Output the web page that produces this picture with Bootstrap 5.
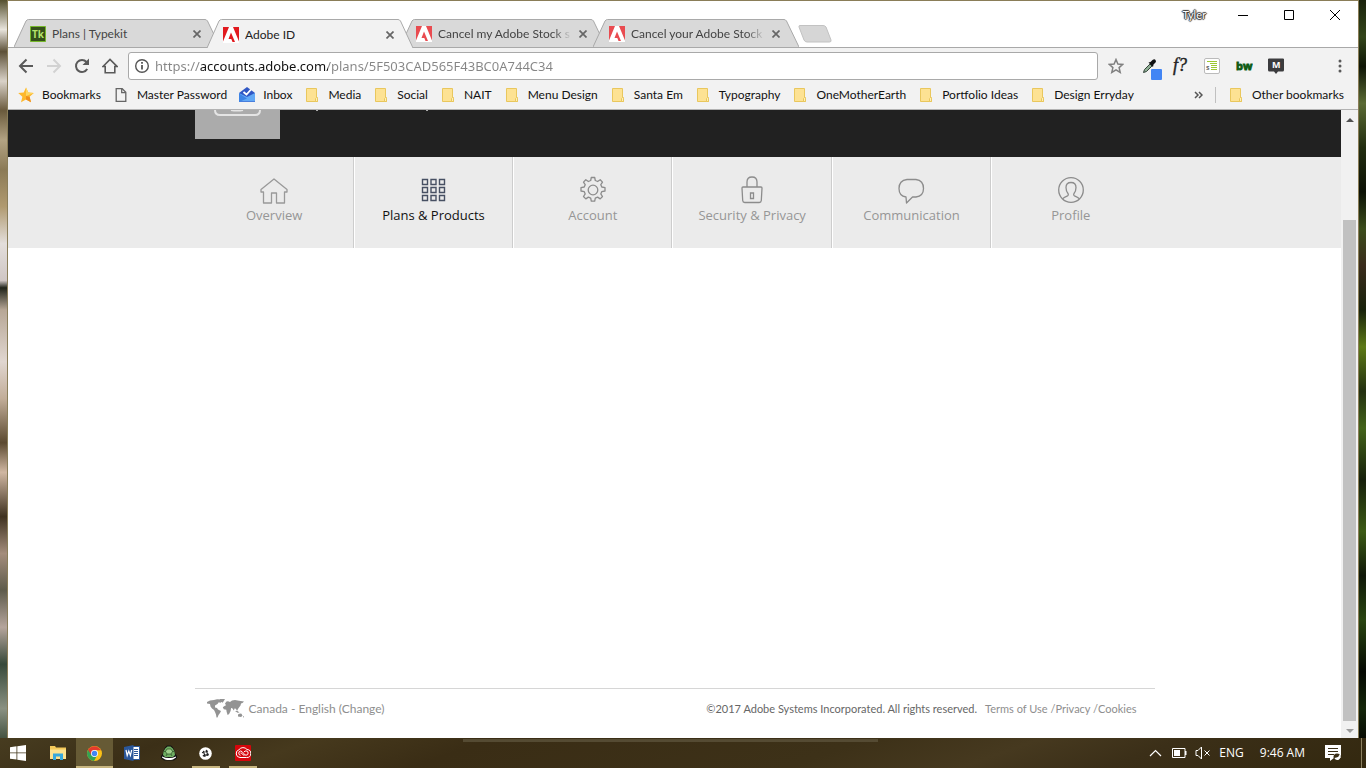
<!DOCTYPE html>
<html lang="en">
<head>
<meta charset="utf-8">
<meta name="viewport" content="width=device-width, initial-scale=1">
<title>Adobe ID</title>
<link href="https://cdn.jsdelivr.net/npm/bootstrap@5.3.0/dist/css/bootstrap.min.css" rel="stylesheet">
<script src="https://cdn.jsdelivr.net/npm/bootstrap@5.3.0/dist/js/bootstrap.bundle.min.js"></script>
<style>
body{font-family:Lato,"Open Sans",sans-serif;font-size:12px;line-height:16px;color:#111;background:#3b3019}
button,input{font:inherit;color:inherit}
button{background:none;border:0;padding:0}
a{text-decoration:none;color:inherit}
svg{display:block;flex:none}
.desktop{padding:0 7px;background:
 linear-gradient(#55502f,#e8e4dc 4%,#5d5138 7%,#d9d2c8 11%,#6a5a3c 15%,#b3a383 19%,#8b7a56 23%,#b09a70 28%,#e3dedb 33%,#cfc6c4 38%,#20241a 39%,#b7a796 42%,#e0d6d0 49%,#c2ad98 54%,#5c4a30 60%,#d0b7a2 64%,#3f3220 70%,#a48d7c 75%,#5e5b4b 80%,#b5a59c 85%,#37493a 90%,#8a9182 96%,#465442) left/7px 100% no-repeat,
 linear-gradient(#1a230c,#33451a 5%,#0f1606 9%,#5a6a34 14%,#222d10 20%,#0c1105 26%,#3c4d1c 31%,#3a2c1c 36%,#18220b 42%,#5d7a17 47%,#233010 53%,#43631a 58%,#16200b 65%,#3c5a15 72%,#0f1808 78%,#294511 84%,#050903 91%,#14260a 96%,#070b03) right/7px 100% no-repeat}
.app-window{border:1px solid #8a7d58;border-bottom:0;background:#fff}
.tabstrip{height:47px;padding:0 0 0 6px;border-bottom:1px solid #a9a9a9}
.tab{position:relative;width:206px;height:28px;margin-right:-13px;padding:2px 19px 0 16px;color:#444}
.tab .shape{position:absolute;inset:0;width:100%;height:100%}
.tab .shape path{fill:#d9d9d9;stroke:#a9a9a9}
.tab.current{z-index:2;margin-bottom:-1px;height:29px}
.tab.current .shape path{fill:#f2f2f2}
.tab>*:not(.shape){position:relative}
.tab-title{flex:1 1 auto;overflow:hidden;white-space:nowrap;margin:0 7px 0 6px}
.tab-title.fade-end{-webkit-mask-image:linear-gradient(90deg,#000 86%,transparent);mask-image:linear-gradient(90deg,#000 86%,transparent)}
.current .tab-title{color:#222}
.close-x{color:#666}
.win-controls{height:28px}
.win-controls button{width:46px}
.user-tag{font-size:11px;color:#fff;text-shadow:0 0 1px #333,1px 0 1px #333,-1px 0 1px #333,0 1px 1px #333,0 -1px 1px #333;padding-right:14px}
.chrome-bar{background:#f2f2f2}
.toolbar-row{height:35px;padding:4px 10px 3px;color:#5a5a5a}
.nav-buttons{gap:12px;margin-right:10px}
.omnibox{height:28px;border:1px solid #a9a9a9;border-radius:3px;background:#fff;padding-left:5px;margin-right:2px}
.omnibox input{border:0;outline:0;padding:0;margin-left:5px;font-family:"Noto Sans","Open Sans",sans-serif;font-size:13px;line-height:20px;height:22px;color:#858585;
 background:linear-gradient(90deg,#858585 45px,#111 45px 173px,#858585 173px);-webkit-background-clip:text;background-clip:text;-webkit-text-fill-color:transparent}
.ext-btn{width:32px;display:flex;justify-content:center;align-items:center}
.menu-btn{width:16px;margin-left:40px}
.bookmarks-row{height:27px;padding:0 14px 2px 10px;border-bottom:1px solid #b2b2b2;gap:12px}
.bookmarks-row a{display:flex;align-items:center;gap:8px;white-space:nowrap}
.bookmarks-row .divider{width:1px;height:16px;background:#c0c0c0}
.site{background:#fff}
.site-inner{width:100%;max-width:960px;margin:0 auto}
.hero{height:47px;background:#212121}
.avatar{width:85px;height:29px;background:#ababab}
.site-nav{background:#ebebeb;font-family:"Open Sans",sans-serif;font-size:13px;line-height:18px;color:#969696}
.site-nav .site-inner{padding-right:4px}
.site-nav a{flex:1 1 0;height:91px;padding-top:17px;border-right:1px solid #cdcdcd;border-left:1px solid #fff}
.site-nav a:first-child{border-left-color:transparent}
.site-nav a:last-child{border-right-color:transparent}
.site-nav a.active{color:#111}
.site-nav svg{margin:0 auto 2px}
.site-footer{border-top:1px solid #d6d6d6;height:50px;padding:0 18px 9px 12px;color:#8e8e8e}
.legal{font-size:11px}
.legal b{font-weight:400;color:#666}
.scroll-track{width:17px;background:#f1f1f1}
.scroll-thumb{width:13px;background:#c1c1c1}
.taskbar{height:30px;background:
 linear-gradient(#554b33,#554b33) 463px 1px/415px 3px no-repeat,
 linear-gradient(160deg,#473c20 0,#3b2f17 12%,#46391d 22%,#3a2d15 34%,#3d3118 60%,#46391f 72%,#3b2f18 82%,#33280f);
 color:#fff;font-family:"Open Sans",sans-serif}
.task-btn{flex:none;width:37px;height:30px;border-bottom:2px solid transparent;padding-top:2px}
.task-btn.start{width:39px;padding-right:4px}
.task-btn.open{background:linear-gradient(#c8b680,#c8b680) center bottom/28px 2px no-repeat border-box}
.task-btn.focused{background:#665a35;border-color:#c8b680}
.action-btn{padding:0 20px}
.show-desktop{width:5px;border-left:1px solid #8b8060;height:30px}
</style>
</head>
<body class="d-flex flex-column vh-100 overflow-hidden">
<svg class="d-none" aria-hidden="true">
 <symbol id="adobe" viewBox="0 0 16 16"><path fill="#fff" d="M0 0h16v16H0z"/><path fill="currentColor" d="M0 0h6L0 14.500zM10 0h6v14.500zM8 5.500l4 9.500H9.500L8.300 12H5.500z"/></symbol>
 <symbol id="close" viewBox="0 0 8 8"><path d="M0.500 0.500l7 7M7.500 0.500l-7 7" stroke="currentColor" stroke-width="1.700"/></symbol>
 <symbol id="folder" viewBox="0 0 16 16"><path d="M2.500 1.500h10v9h1v4h-11z" fill="#fde293" stroke="#e9c75d"/><path d="M11.500 14.500v-3l1-1 1 1v3z" fill="#fff0b5" stroke="#e9c75d"/></symbol>
</svg>

<div class="desktop flex-grow-1 d-flex">
<div class="app-window flex-grow-1 d-flex flex-column">

 <div class="tabstrip d-flex align-items-end">
  <div class="tab d-flex align-items-center">
   <svg class="shape" viewBox="0 0 206 28" preserveAspectRatio="none"><path d="M0 28L12 2q1-1.500 2.500-1.500H191q1.500 0 2.500 1.500L206 28"/></svg>
   <svg width="16" height="16"><path d="M.5.5h15v15H.5z" fill="#35501b" stroke="#76b82a"/><text x="2" y="12" font-size="10" font-weight="700" fill="#b6e36c" font-family="Open Sans,sans-serif">Tk</text></svg>
   <span class="tab-title">Plans | Typekit</span>
   <button class="close-x" aria-label="Close tab"><svg width="8" height="8"><use href="#close"/></svg></button>
  </div>
  <div class="tab current d-flex align-items-center">
   <svg class="shape" viewBox="0 0 206 29" preserveAspectRatio="none"><path d="M0 29L12 2q1-1.500 2.500-1.500H191q1.500 0 2.500 1.500L206 29"/></svg>
   <svg width="16" height="16" color="#e1191e"><use href="#adobe"/></svg>
   <span class="tab-title">Adobe ID</span>
   <button class="close-x" aria-label="Close tab"><svg width="8" height="8"><use href="#close"/></svg></button>
  </div>
  <div class="tab d-flex align-items-center">
   <svg class="shape" viewBox="0 0 206 28" preserveAspectRatio="none"><path d="M0 28L12 2q1-1.500 2.500-1.500H191q1.500 0 2.500 1.500L206 28"/></svg>
   <svg width="16" height="16" color="#e94b50"><use href="#adobe"/></svg>
   <span class="tab-title fade-end">Cancel my Adobe Stock s</span>
   <button class="close-x" aria-label="Close tab"><svg width="8" height="8"><use href="#close"/></svg></button>
  </div>
  <div class="tab d-flex align-items-center">
   <svg class="shape" viewBox="0 0 206 28" preserveAspectRatio="none"><path d="M0 28L12 2q1-1.500 2.500-1.500H191q1.500 0 2.500 1.500L206 28"/></svg>
   <svg width="16" height="16" color="#e94b50"><use href="#adobe"/></svg>
   <span class="tab-title fade-end">Cancel your Adobe Stock</span>
   <button class="close-x" aria-label="Close tab"><svg width="8" height="8"><use href="#close"/></svg></button>
  </div>
  <button class="ms-2 ps-1 mb-1" aria-label="New tab"><svg width="34" height="18"><path d="M2 .5h23q2 0 3 1.500l5 13q.5 2-1.500 2H9q-2 0-3-2L1 2Q.5.500 2 .5z" fill="#d6d6d6" stroke="#c2c2c2"/></svg></button>
  <div class="win-controls ms-auto d-flex align-items-center align-self-start">
   <span class="user-tag">Tyler</span>
   <button aria-label="Minimize"><svg class="mx-auto" width="10" height="10"><path d="M0 5.500h10" stroke="#000"/></svg></button>
   <button aria-label="Maximize"><svg class="mx-auto" width="10" height="10"><path d="M.5.500h9v9h-9z" fill="none" stroke="#000"/></svg></button>
   <button aria-label="Close"><svg class="mx-auto" width="10" height="10"><path d="M0 0l10 10M10 0L0 10" stroke="#000"/></svg></button>
  </div>
 </div>

 <div class="chrome-bar">
  <div class="toolbar-row d-flex align-items-center">
   <div class="nav-buttons d-flex align-items-center">
    <button aria-label="Back"><svg width="16" height="16" fill="none" stroke="currentColor" stroke-width="2"><path d="M15 8H2.500M8.500 1.500L2 8l6.500 6.500"/></svg></button>
    <button aria-label="Forward"><svg width="16" height="16" fill="none" stroke="#d2d2d2" stroke-width="2"><path d="M1 8h12.500M7.500 1.500L14 8l-6.500 6.500"/></svg></button>
    <button aria-label="Reload"><svg width="16" height="16"><path d="M13.200 11A6 6 0 1 1 12.500 4" fill="none" stroke="currentColor" stroke-width="2"/><path d="M15 .5V7H8.500z" fill="currentColor"/></svg></button>
    <button aria-label="Home"><svg width="16" height="16" fill="none" stroke="currentColor" stroke-width="1.600"><path d="M1 8.500L8 1.500l7 7h-2.200v6.300H3.200V8.500z"/></svg></button>
   </div>
   <div class="omnibox flex-grow-1 d-flex align-items-center">
    <svg width="16" height="16"><circle cx="8" cy="8" r="6.300" fill="none" stroke="#555" stroke-width="1.400"/><path d="M8 7v4.500M8 4v1.800" stroke="#555" stroke-width="1.800"/></svg>
    <input class="flex-grow-1" type="text" aria-label="Address" value="https://accounts.adobe.com/plans/5F503CAD565F43BC0A744C34">
   </div>
   <div class="d-flex align-items-center">
    <button class="ext-btn" aria-label="Bookmark this page"><svg width="16" height="16"><path d="M8 1.500l1.900 4.500 4.800.4-3.600 3.200 1.100 4.800L8 11.800l-4.200 2.600 1.100-4.800L1.300 6.400 6.100 6z" fill="none" stroke="#808080" stroke-width="1.500"/></svg></button>
    <button class="ext-btn" aria-label="Color picker"><svg width="28" height="28"><path d="M9.500 20.500l1-3 5.500-5.500 2 2-5.500 5.500z" fill="#8fae93" stroke="#33443a"/><path d="M14.500 10.500l2-.5 2-2q2-1.500 3 0t0 2.500l-2 2-.5 2.500z" fill="#111"/><rect x="17" y="17" width="11" height="11" rx="1" fill="#4285f4"/></svg></button>
    <button class="ext-btn" aria-label="Font finder"><svg width="24" height="26"><text x="5" y="18" font-family="Liberation Serif,serif" font-style="italic" font-size="18" fill="#222" stroke="#222" stroke-width=".4">f?</text></svg></button>
    <button class="ext-btn" aria-label="Page ruler"><svg width="16" height="16"><rect x=".5" y=".5" width="15" height="15" rx="1.500" fill="#fff" stroke="#bbb"/><path d="M3 3.500h10M6 5.500h7M7 7.500h6M7 9.500h6M7 11.500h6" stroke="#9cc832" stroke-width="1.200"/><text x="2" y="12" font-size="7" font-weight="700" fill="#666" font-family="Open Sans,sans-serif">s</text></svg></button>
    <button class="ext-btn" aria-label="BuiltWith"><svg width="18" height="16"><text x="1" y="12" font-size="11" font-weight="700" fill="#0b5a12" stroke="#0b5a12" stroke-width=".8" font-family="Open Sans,sans-serif">bw</text></svg></button>
    <button class="ext-btn" aria-label="Mail checker"><svg width="16" height="16"><path d="M0 1.500Q0 0 1 1l1-1 1 1 1-1 1 1 1-1 1 1 1-1 1 1 1-1 1 1 1-1 1 1 1-1 1 1q1-1 1 .5V12q0 1.500-1.500 1.500H10L8 16l-2-2.500H1.500Q0 13.500 0 12z" fill="#3c3c3e"/><text x="4" y="10" font-size="9" font-weight="700" fill="#fff" font-family="Open Sans,sans-serif">M</text></svg></button>
    <button class="menu-btn" aria-label="Menu"><svg class="mx-auto" width="4" height="14" fill="#5a5a5a"><circle cx="2" cy="2" r="1.500"/><circle cx="2" cy="7" r="1.500"/><circle cx="2" cy="12" r="1.500"/></svg></button>
   </div>
  </div>

  <nav class="bookmarks-row d-flex align-items-center" aria-label="Bookmarks">
   <a href="#"><svg width="16" height="16"><path d="M8 .5l2.300 5 5.500.5-4.200 3.700 1.400 5.500L8 12.500 3 15.200l1.400-5.500L.2 6l5.500-.5z" fill="#fdb82c"/><path d="M8 .5l2.300 5 5.500.5L8 9z" fill="#fdd663"/><path d="M8 9l3.600.7 1.400 5.500L8 12.500z" fill="#ef8f1c"/></svg>Bookmarks</a>
   <a href="#"><svg width="16" height="16" fill="none" stroke="#666" stroke-width="1.300"><path d="M3.200 1.700h6l3.600 3.600v9H3.200z"/><path d="M8.700 1.700v4h4"/></svg>Master Password</a>
   <a href="#"><svg width="16" height="16"><path d="M0 6l8-6 8 6v9H0z" fill="#3057c4"/><path d="M0 6l8 4 8-4v8.500H0z" fill="#62a8f5"/><path d="M0 6.500l8 5-8 3.500z" fill="#3d84e6"/><path d="M4.500 5L7.500 7.500 12 2.500" stroke="#fff" stroke-width="1.800" fill="none"/></svg>Inbox</a>
   <a href="#"><svg width="16" height="16"><use href="#folder"/></svg>Media</a>
   <a href="#"><svg width="16" height="16"><use href="#folder"/></svg>Social</a>
   <a href="#"><svg width="16" height="16"><use href="#folder"/></svg>NAIT</a>
   <a href="#"><svg width="16" height="16"><use href="#folder"/></svg>Menu Design</a>
   <a href="#"><svg width="16" height="16"><use href="#folder"/></svg>Santa Em</a>
   <a href="#"><svg width="16" height="16"><use href="#folder"/></svg>Typography</a>
   <a href="#"><svg width="16" height="16"><use href="#folder"/></svg>OneMotherEarth</a>
   <a href="#"><svg width="16" height="16"><use href="#folder"/></svg>Portfolio Ideas</a>
   <a href="#"><svg width="16" height="16"><use href="#folder"/></svg>Design Erryday</a>
   <button class="ms-auto" aria-label="More bookmarks"><svg width="9" height="8" fill="none" stroke="#555" stroke-width="1.500"><path d="M1 1l3 3-3 3M5 1l3 3-3 3"/></svg></button>
   <span class="divider"></span>
   <a href="#"><svg width="16" height="16"><use href="#folder"/></svg>Other bookmarks</a>
  </nav>
 </div>

 <div class="site flex-grow-1 d-flex">
  <div class="flex-grow-1 d-flex flex-column">
   <header class="hero"><div class="site-inner d-flex">
    <div class="avatar"><svg class="mx-auto" width="47" height="7" fill="none" stroke="#e4e4e4" stroke-width="2"><path d="M1 0q0 5 5 5h35q5 0 5-5M17 0q6 1 12 0"/></svg></div>
    <svg class="ms-4" width="130" height="2" fill="#aaa"><path d="M12 0h2v1h-2zM122 0h2v1h-2z"/></svg>
   </div></header>
   <nav class="site-nav"><div class="site-inner d-flex text-center">
    <a href="#"><svg width="28" height="30" viewBox="0 -1 28 30" fill="none" stroke="#999" stroke-width="1.300" stroke-linejoin="round"><path d="M14 4L1 14.500v2.500h2.500v11h8v-10h5v10h8V17H27v-2.500z"/></svg>Overview</a>
    <a class="active" href="#"><svg width="28" height="30" viewBox="0 0 28 30" fill="none" stroke="#475063" stroke-width="1.400"><path d="M3.500 5.500h5v5h-5zM12 5.500h5v5h-5zM20.500 5.500h5v5h-5zM3.500 13.500h5v5h-5zM12 13.500h5v5h-5zM20.500 13.500h5v5h-5zM3.500 21.500h5v5h-5zM12 21.500h5v5h-5zM20.500 21.500h5v5h-5z"/></svg>Plans &amp; Products</a>
    <a href="#"><svg width="28" height="30" viewBox="0 0 28 30" fill="none" stroke="#8c8c8c" stroke-width="1.300" stroke-linejoin="round"><circle cx="14" cy="16" r="4.800"/><path d="M12.300 3.500h3.400l.6 3 2.300 1 2.600-1.800 2.300 2.400-1.700 2.600 1 2.300 3.200.6v3.400l-3.200.6-1 2.300 1.700 2.600-2.300 2.400-2.600-1.800-2.300 1-.6 3h-3.400l-.6-3-2.300-1-2.600 1.800-2.300-2.400 1.700-2.600-1-2.300-3.200-.6v-3.400l3.200-.6 1-2.300-1.700-2.600 2.300-2.400 2.600 1.800 2.300-1z"/></svg>Account</a>
    <a href="#"><svg width="28" height="30" viewBox="0 0 28 30" fill="none" stroke="#8c8c8c" stroke-width="1.300"><path d="M5 13h18q1 0 1 1l-.7 12.500q-.2 2-2 2H6.700q-1.800 0-2-2L4 14q0-1 1-1zM9 13V8q0-5 5-5t5 5v5M12.500 19h3v5.500h-3z"/></svg>Security &amp; Privacy</a>
    <a href="#"><svg width="28" height="30" viewBox="0 0 28 30" fill="none" stroke="#8c8c8c" stroke-width="1.300" stroke-linejoin="round"><path d="M10 5.500h9q7.500 1 7.500 9 0 7.500-7.500 8.500h-3.500L9.500 29l-.5-6q-7-1-7-8.500 0-8 8-9z"/></svg>Communication</a>
    <a href="#"><svg width="28" height="30" viewBox="0 0 28 30" fill="none" stroke="#8c8c8c" stroke-width="1.300"><circle cx="14" cy="16" r="12.300"/><path d="M5.500 25q1-1.500 5-3.200 1.300-.6.500-2.300-2-2.500-2-6 0-5 5-5t5 5q0 3.500-2 6-.8 1.700.5 2.300 4 1.700 5 3.200"/></svg>Profile</a>
   </div></nav>
   <footer class="site-footer site-inner mt-auto d-flex align-items-center">
    <svg width="38" height="20" fill="#939393"><path d="M0 3l3-1.500 4-.5 3-.7 6 .2-1 2-2 1.500-1-1-1.500 2-2.500 1.500v2l2 .5 1 1.500 3 1.500-1 2-1.500 2-1 2.500h-1l-.5-3-1-2.500-1-2-2-1.500-1.500-2L3 5 0 4.500zM13 0h5l-1.500 2.500-1 1.200L14 2.500zM18 4.500l1.500-2L21 2.200l2 .8 2-1.500 3-.5 4 .8 5 .8-1.500 1.500-1.500.5-.5 2-1.500 2-1 1.500-1 2-1-2-1.200-.8-1 2.300-1.500-2.300-1.200-.3-.5 3-1.500 3-1.500 1-1-3.200-.3-2-2.500-.5-1-2L17.500 7l1.500-.8zM28 12h2.500l2 1.500-2 .3zM31 15.500l2-1 1.500.2 1 2-1.500 1.200-3-.5zM36 17l1 .5-1 1.500z"/></svg>
    <a class="ps-1" href="#">Canada - English (Change)</a>
    <span class="legal ms-auto text-nowrap"><b class="me-2">©2017 Adobe Systems Incorporated. All rights reserved.</b><a href="#">Terms of Use</a> /<a href="#">Privacy</a> /<a href="#">Cookies</a></span>
   </footer>
  </div>
  <div class="scroll-track d-flex flex-column align-items-center">
   <svg class="my-2" width="8" height="4"><path d="M0 4l4-4 4 4z" fill="#505050"/></svg>
   <div style="flex:90"></div><div class="scroll-thumb" style="flex:501"></div>
   <svg class="mt-2 mb-1" width="8" height="5"><path d="M0 0l4 4 4-4z" fill="#9a9a9a"/></svg>
  </div>
 </div>
</div>
</div>

<div class="taskbar d-flex align-items-center">
 <button class="task-btn start" aria-label="Start"><svg class="mx-auto" width="16" height="16" fill="#fff"><path d="M0 2.200L6.500 1.300v6.200H0zM7.300 1.200L16 0v7.500H7.300zM0 8.300h6.500v6.300L0 13.700zM7.300 8.300H16V16l-8.700-1.200z"/></svg></button>
 <button class="task-btn" aria-label="File Explorer"><svg class="mx-auto" width="16" height="16"><path d="M0 1h5l1 1.500h10V14H0z" fill="#f4c95a"/><path d="M0 4.500h16V14H0z" fill="#fde38f"/><path d="M3 8.500h10V15h-3v-3.500H6V15H3z" fill="#38a9dc"/></svg></button>
 <button class="task-btn focused" aria-label="Chrome"><svg class="mx-auto" width="15" height="15" viewBox="0 0 16 16"><circle cx="8" cy="8" r="8" fill="#fbc116"/><path d="M8 8L1.100 4A8 8 0 0 0 7.500 16L11 9.500z" fill="#34a353"/><path d="M1.100 4A8 8 0 0 1 14.900 4.500H8L4.500 9.500z" fill="#e33b2e"/><circle cx="8" cy="8" r="3.700" fill="#fff"/><circle cx="8" cy="8" r="2.900" fill="#4285f4"/></svg></button>
 <button class="task-btn" aria-label="Word"><svg class="mx-auto" width="16" height="16"><path d="M8.500 1.500h7v13h-7z" fill="#fff" stroke="#2b579a"/><path d="M10 4.500h4M10 6.500h4M10 8.500h4M10 10.500h4" stroke="#2b579a"/><path d="M0 2l9.500-2v16L0 14z" fill="#2b579a"/><path d="M2 5l1.200 5.500L4.800 6l1.600 4.500L7.700 5" stroke="#fff" stroke-width="1.200" fill="none"/></svg></button>
 <button class="task-btn" aria-label="Shell"><svg class="mx-auto" width="16" height="16"><path d="M0 11l2-2.500Q2.500 3 6 .500h4Q13.500 3 14 8.500l2 2.500v2l-3 2.500H3L0 13z" fill="#111"/><path d="M2 10q0-5.500 4.500-8.500h3Q14 4.500 14 10l-2 2H4z" fill="#6fae62"/><path d="M6 4h4l1.500 2.500L10 9H6L4.500 6.500z" fill="#9fd08b"/><path d="M6 4h4l1.500 2.500L10 9H6L4.500 6.500zM4.500 6.500H3M11.500 6.500H13M6 9l-1 2M10 9l1 2" fill="none" stroke="#1d3a1a" stroke-width=".6"/><path d="M1 11.500q7 3 14 0v1l-3 2q-4 1-8 0l-3-2z" fill="#fff"/></svg></button>
 <button class="task-btn open" aria-label="Slack"><svg class="mx-auto" width="13" height="13"><circle cx="6.500" cy="6.500" r="6.300" fill="#fff"/><path d="M4.300 3.800l1.800 6M7.200 2.900l1.800 6M3 5.800l6-1.800M3.800 8.900l6-1.800" stroke="#222" stroke-width="1.200"/></svg></button>
 <button class="task-btn open" aria-label="Creative Cloud"><svg class="mx-auto" width="16" height="16"><rect width="16" height="16" rx="1" fill="#d5060b"/><path d="M5 12.500a4 4 0 0 1-1-7.800 5 5 0 0 1 8-.2 4 4 0 0 1-.5 8zM5.500 10.300a2.200 2.200 0 0 1 0-4.300q1.500 0 3 2.200T11 10.200a2 2 0 0 0 0-4.300q-1 0-2 1M5.500 8h1q1.500 2.500 3 2.300" fill="none" stroke="#fff" stroke-width="1"/></svg></button>
 <div class="ms-auto d-flex align-items-center">
  <svg class="me-2" width="16" height="8" fill="none" stroke="#fff" stroke-width="1.200"><path d="M2 7l5.500-5.500L13 7"/></svg>
  <svg class="me-2" width="15" height="10"><path d="M.5.500h12.500v9H.5z" fill="none" stroke="#fff"/><path d="M2 2h6v6H2zM13 3h1.500v4H13z" fill="#fff"/></svg>
  <svg class="me-2" width="16" height="14" fill="none" stroke="#fff"><path d="M1 4.500h2l3.500-3.500v12L3 9.500H1zM9.500 4.500l5 5M14.500 4.500l-5 5"/></svg>
  <span>ENG</span>
  <span class="ms-3">9:46 AM</span>
  <button class="action-btn" aria-label="Action center"><svg width="16" height="16"><path d="M0 0h16v13H9l-4 3v-3H0z" fill="#fff"/><path d="M3 3.500h10M3 6.500h10M3 9.500h6" stroke="#3b2f17"/><circle cx="12" cy="12" r="3.500" fill="#3b2f17"/><path d="M9.500 13a3 3 0 0 0 4.500 1.500 3 3 0 0 0 0-5q.5 3-4.500 3.500z" fill="#fff"/></svg></button>
  <span class="show-desktop"></span>
 </div>
</div>
</body>
</html>
